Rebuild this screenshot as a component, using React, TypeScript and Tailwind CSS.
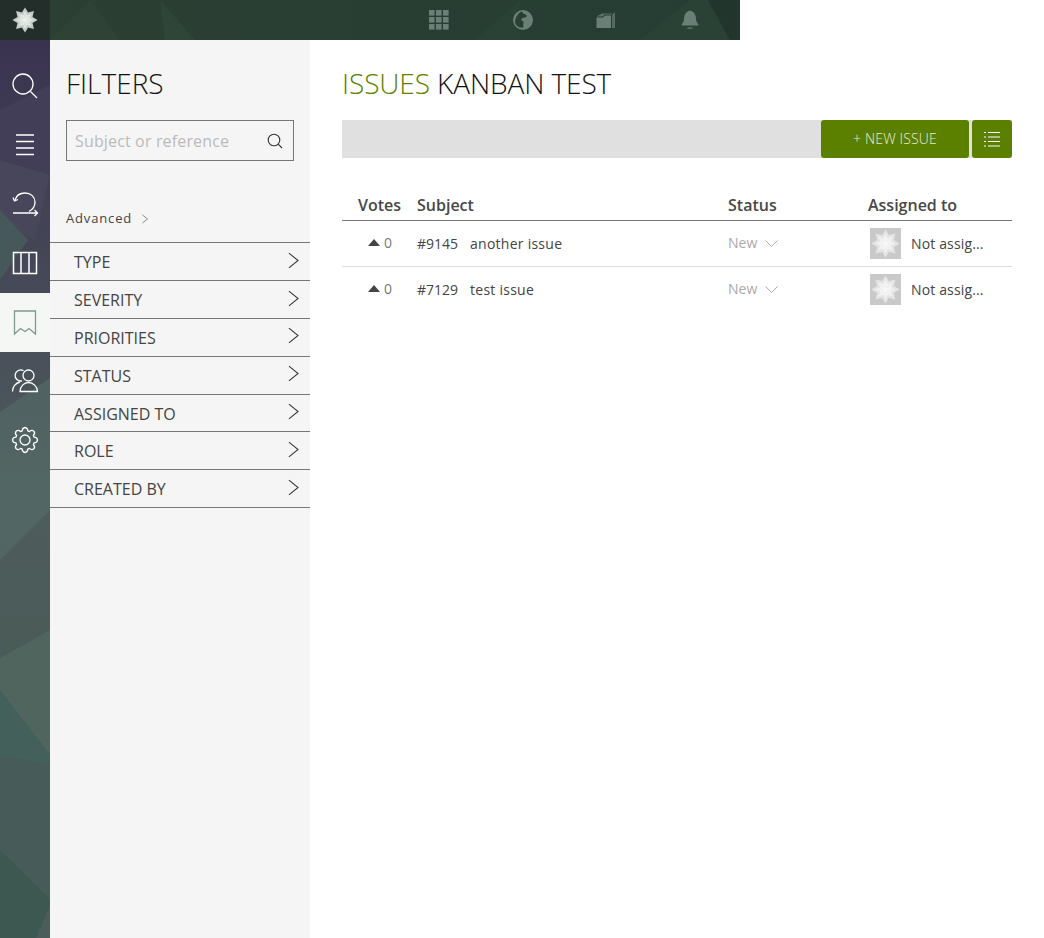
import React from 'react';

const FILTERS = ['TYPE', 'SEVERITY', 'PRIORITIES', 'STATUS', 'ASSIGNED TO', 'ROLE', 'CREATED BY'];

const ISSUES = [
  { id: '#9145', subject: 'another issue' },
  { id: '#7129', subject: 'test issue' },
];

const petals = [0, 45, 90, 135, 180, 225, 270, 315];

// eight pointed star, same mark in the top bar and the avatars
const Logo: React.FC<{ size: number; base: string; light: string }> = ({ size, base, light }) => (
  <svg width={size} height={size} viewBox="0 0 32 32">
    <circle cx="16" cy="16" r="9.500" fill={base} />
    {petals.map(a => (
      <path key={a} d="M16 16 L12.170 6.760 L16 0.500 L19.830 6.760 Z" fill={base} transform={`rotate(${a} 16 16)`} />
    ))}
    {petals.map(a => (
      <path key={a} d="M16 16 L13 11 L16 5 L19 11 Z" fill={light} opacity="0.6" transform={`rotate(${a} 16 16)`} />
    ))}
    <circle cx="16" cy="16" r="2.500" fill={light} />
  </svg>
);

const Chevron: React.FC<{ className?: string }> = ({ className }) => (
  <svg className={className} viewBox="0 0 12 18" fill="none" stroke="currentColor" strokeWidth="1.1">
    <path d="M1 1 L11 9 L1 17" />
  </svg>
);

const NavIcon: React.FC<{ children: React.ReactNode; active?: boolean }> = ({ children, active }) => (
  <div className={`h-[59px] flex items-center justify-center ${active ? 'bg-[#f5f7f5] text-[#7d9a8c]' : 'text-white'}`}>
    <svg className="-mt-[2px]" width="28" height="28" viewBox="0 0 28 28" fill="none" stroke="currentColor" strokeWidth="1.3">
      {children}
    </svg>
  </div>
);

const gearPath = () => {
  let d = '';
  for (let i = 0; i < 8; i++) {
    const a = (i * Math.PI) / 4 - Math.PI / 2;
    const pt = (r: number, o: number) => `${(14 + r * Math.cos(a + o)).toFixed(2)} ${(14 + r * Math.sin(a + o)).toFixed(2)}`;
    d += `${i === 0 ? 'M' : 'L'}${pt(9.5, -0.3)} Q${pt(12.5, -0.22)} ${pt(12.5, 0)} Q${pt(12.5, 0.22)} ${pt(9.5, 0.3)} `;
  }
  return d + 'Z';
};

const TopBar: React.FC = () => (
  <div className="relative h-10 w-[740px] flex bg-gradient-to-r from-[#2d3f33] via-[#283e33] to-[#263d33] overflow-hidden">
    <svg className="absolute inset-0" width="740" height="40" viewBox="0 0 740 40">
      <polygon points="50,40 90,0 120,40" fill="#2f4236" />
      <polygon points="160,0 195,40 165,40" fill="#2f4537" />
      <polygon points="475,40 520,0 520,40" fill="#2a4236" />
      <polygon points="640,40 690,0 708,0 730,40" fill="#2a4236" />
      <polygon points="708,0 740,0 740,40 730,40" fill="#22352d" />
    </svg>
    <div className="relative w-[50px] h-10 bg-[#232e2a] flex items-center justify-center shrink-0">
      <Logo size={26} base="#c4ccc8" light="#eef1ef" />
    </div>
    <div className="relative flex-1 flex pl-[347px] text-[#6a7f75]">
      <div className="w-[84px] flex items-center justify-center">
        <svg width="20" height="20" viewBox="0 0 20 20" fill="currentColor">
          {[0, 7, 14].flatMap(y => [0, 7, 14].map(x => <rect key={`${x}-${y}`} x={x} y={y} width="5.6" height="5.6" />))}
        </svg>
      </div>
      <div className="w-[83px] flex items-center justify-center">
        <svg width="20" height="20" viewBox="0 0 20 20" fill="currentColor">
          <path fillRule="evenodd" d="M10 0a10 10 0 1 0 0 20a10 10 0 0 0 0-20Zm-1 1.600c.8.9 1 1.700 1.600 2.300c.9.800 2.600.300 3 1.500c.3 1-.8 1.800-1.800 2.200c-1.300.5-2.500 0-3.300 1.100c-.7 1 .3 2 1.300 2.600c.8.500.9 1.500.6 2.500c-.3 1.100-.4 2.300.2 3.500C6 18.500 3.500 16 2.300 13.500C1.500 9 4.500 3 9 1.600Z" />
        </svg>
      </div>
      <div className="w-[84px] flex items-center justify-center">
        <svg width="20" height="20" viewBox="0 0 20 20" fill="currentColor">
          <path d="M0.500 7.500L7 7.500L9 5.500L15 5.500L15 18L0.500 18Z" />
          <path d="M0.500 6.500L6 3.500L16 3.500L16 4.500L8.500 4.500L6.500 6.500Z" fillOpacity="0.8" />
          <path d="M16 5L19 2L19 18L16 18Z" fillOpacity="0.7" />
        </svg>
      </div>
      <div className="w-[84px] flex items-center justify-center">
        <svg width="20" height="20" viewBox="0 0 20 20" fill="currentColor">
          <path d="M10 0.500C14 1.500 16 5 16 9C16 12 18 13 18.500 15.500L1.500 15.500C2 13 4 12 4 9C4 5 6 1.500 10 0.500Z" />
          <rect x="7.500" y="17.500" width="5" height="1.200" />
        </svg>
      </div>
    </div>
  </div>
);

const Sidebar: React.FC = () => (
  <nav className="relative w-[50px] shrink-0 bg-gradient-to-b from-[#3a3350] via-[#4f5c5c] to-[#3f5a51] overflow-hidden">
    <svg className="absolute inset-0" width="50" height="898" viewBox="0 0 50 898">
      <polygon points="0,70 50,45 50,130 0,120" fill="#433e58" />
      <polygon points="0,120 50,135 35,200 0,180" fill="#48465a" />
      <polygon points="0,170 28,200 0,240" fill="#46585a" />
      <polygon points="0,372 50,338 50,470 0,520" fill="#56706a" fillOpacity="0.55" />
      <polygon points="0,618 50,590 50,715 0,650" fill="#4f655e" />
      <polygon points="0,650 50,715 50,725 0,715" fill="#43605a" />
      <polygon points="0,715 50,725 50,860 0,810" fill="#475c59" />
      <polygon points="0,810 50,860 50,898 0,898" fill="#3c5850" />
      <polygon points="36,898 50,865 50,898" fill="#4b5d5b" />
    </svg>
    <div className="relative pt-[17px]">
      <NavIcon>
        <circle cx="12" cy="12" r="10" />
        <path d="M19.500 19.500L26 26" />
      </NavIcon>
      <NavIcon>
        <path d="M5 4H23M5 10.500H23M5 17H23M5 23.500H23" />
      </NavIcon>
      <NavIcon>
        <path d="M4 10C5.500 5 10 3 14 3C20 3 24 7 24 12C24 17 21 20 18 21.500" />
        <path d="M7 9.500L3.500 11L2 7.500" />
        <path d="M2 23H26.500M23.500 20L26.500 23L23.500 26" />
      </NavIcon>
      <NavIcon>
        <rect x="2.500" y="3.500" width="23" height="21" strokeWidth="1.500" />
        <path d="M10 3.500V24.500M18 3.500V24.500" strokeWidth="1.500" />
      </NavIcon>
      <NavIcon active>
        <path d="M3.500 3H24.500V26L18 20.500L14 23.500L9.500 20.500L3.500 26Z" />
      </NavIcon>
      <NavIcon>
        <circle cx="17.500" cy="8.500" r="5.500" />
        <path d="M9 24.500C9 19.500 13 15.500 17.500 15.500C22 15.500 26.500 19.500 26.500 24.500Z" />
        <path d="M12.500 3.800A5.500 5.500 0 1 0 11 13.800" />
        <path d="M1.500 24.500C1.500 20 4.500 16 9 15" />
      </NavIcon>
      <NavIcon>
        <circle cx="14" cy="14" r="5" />
        <path d={gearPath()} strokeLinejoin="round" />
      </NavIcon>
    </div>
  </nav>
);

const FilterPanel: React.FC = () => (
  <aside className="w-[260px] shrink-0 bg-[#f5f5f5]">
    <h2 className="pl-4 pt-[23px] text-[28px] leading-[40px] font-light text-[#111]">FILTERS</h2>
    <div className="mx-4 mt-[17px] h-[41px] border border-[#777] flex items-center justify-between pl-2 pr-[10px]">
      <span className="text-[16px] tracking-[0.15px] text-[#bbb]">Subject or reference</span>
      <svg width="16" height="16" viewBox="0 0 16 16" fill="none" stroke="#333" strokeWidth="1.100">
        <circle cx="7" cy="7" r="5.800" />
        <path d="M11.200 11.200L15 15" />
      </svg>
    </div>
    <div className="pl-4 mt-[48px] h-[20px] flex items-center gap-[10px] text-[13px] tracking-[0.85px] text-[#444]">
      Advanced
      <Chevron className="w-[6px] h-[10px] text-[#333]" />
    </div>
    <ul className="mt-[13.3px] border-b border-[#777]">
      {FILTERS.map(name => (
        <li key={name} className="h-[37.83px] border-t border-[#777] flex items-center justify-between pl-6 pr-[11px] text-[16px] text-[#444]">
          <span className="pt-[1px]">{name}</span>
          <Chevron className="w-[11px] h-[17px] text-[#333] -mt-[3px]" />
        </li>
      ))}
    </ul>
  </aside>
);

const IssueRow: React.FC<{ id: string; subject: string; last: boolean }> = ({ id, subject, last }) => (
  <div className={`flex items-center text-[14px] tracking-[0.25px] text-[#444] ${last ? 'h-[45px]' : 'h-[46px] border-b border-[#ddd]'}`}>
    <div className="w-[75px] flex items-center pl-[26px] gap-[4px] text-[#777] -mt-[2px]">
      <span className="w-0 h-0 border-x-[6px] border-x-transparent border-b-[7px] border-b-[#444]" />
      <span>0</span>
    </div>
    <div className="w-[311px] flex gap-3">
      <span className="tracking-normal">{id}</span>
      <span>{subject}</span>
    </div>
    <div className="w-[142px] flex items-center gap-[8px] text-[#aaa] tracking-normal">
      <span className="-mt-[2px]">New</span>
      <svg width="13" height="8" viewBox="0 0 13 8" fill="none" stroke="#aaa" strokeWidth="1">
        <path d="M0.500 0.500L6.500 6.500L12.500 0.500" />
      </svg>
    </div>
    <div className="flex items-center gap-[10px]">
      <div className="w-[31px] h-[31px] bg-[#c9c9c9] flex items-center justify-center">
        <Logo size={29} base="#e4e4e4" light="#f8f8f8" />
      </div>
      <span className="tracking-[0.15px]">Not assig...</span>
    </div>
  </div>
);

const App: React.FC = () => (
  <div className="h-[938px] w-[1044px] overflow-hidden bg-white flex flex-col font-['Open_Sans',sans-serif]">
    <TopBar />
    <div className="flex flex-1 min-h-0">
      <Sidebar />
      <FilterPanel />
      <main className="flex-1 pl-8 pr-8">
        <h1 className="pt-[23px] text-[28px] leading-[40px] font-light tracking-[-0.1px] text-[#111]">
          <span className="text-[#5b8000]">ISSUES</span> KANBAN TEST
        </h1>
        <div className="mt-[17px] h-[38px] bg-[#e0e0e0] flex justify-end">
          <button className="w-[148px] h-[38px] pb-[1px] rounded-[3px] bg-[#5b8000] text-[14px] tracking-[0.15px] font-light text-[#e6eed8]">+ NEW ISSUE</button>
          <button className="ml-[3px] w-[40px] h-[38px] rounded-[3px] bg-[#5b8000] flex items-center justify-center">
            <svg width="16" height="16" viewBox="0 0 16 16" stroke="#fff" strokeWidth="1" fill="none">
              <path d="M0 1.500H2M4 1.500H16M0 6H2M4 6H16M0 10.500H2M4 10.500H16M0 15H2M4 15H16" />
            </svg>
          </button>
        </div>
        <div className="mt-[36px] h-[27px] flex border-b border-[#777] text-[16px] font-semibold text-[#484848] leading-[22px]">
          <div className="w-[75px] pl-4">Votes</div>
          <div className="w-[311px]">Subject</div>
          <div className="w-[140px]">Status</div>
          <div>Assigned to</div>
        </div>
        {ISSUES.map((issue, i) => (
          <IssueRow key={issue.id} id={issue.id} subject={issue.subject} last={i === ISSUES.length - 1} />
        ))}
      </main>
    </div>
  </div>
);

export default App;
